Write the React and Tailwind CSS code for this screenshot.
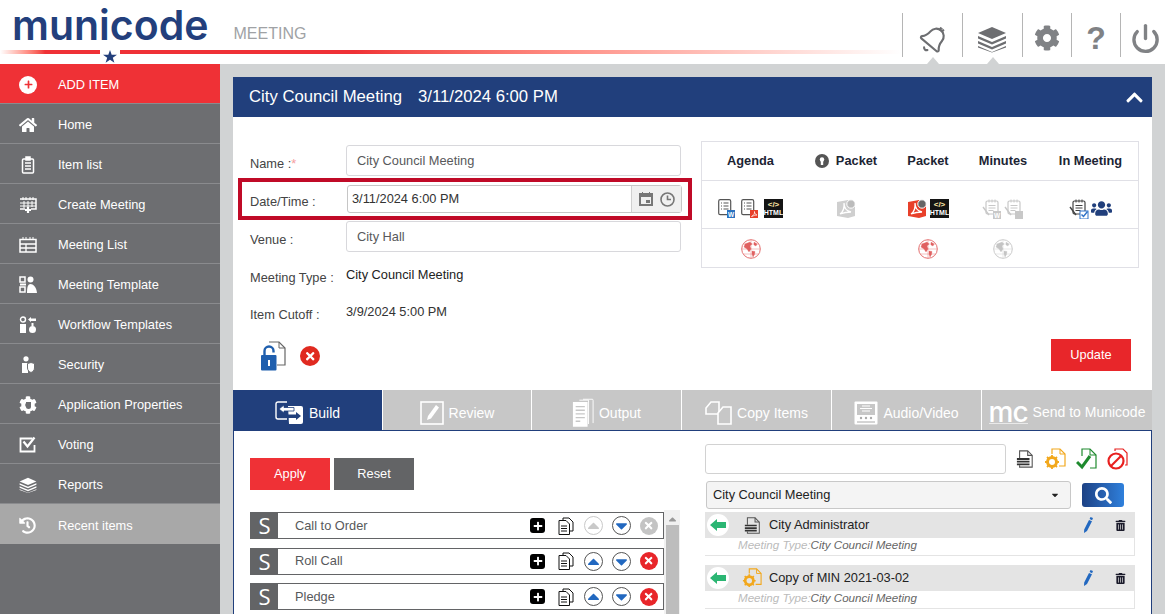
import { FaHome, FaCog, FaUsers, FaTrashAlt, FaHistory, FaChevronUp, FaSearch, FaCaretDown, FaPlus, FaTimes, FaCaretUp } from 'react-icons/fa'
import { Power } from 'lucide-react'

const sideItems = [
  { label: 'Home', icon: <FaHome size={18} /> },
  { label: 'Item list', icon: <ClipIcon /> },
  { label: 'Create Meeting', icon: <CalPlusIcon /> },
  { label: 'Meeting List', icon: <CalListIcon /> },
  { label: 'Meeting Template', icon: <TemplateIcon /> },
  { label: 'Workflow Templates', icon: <WorkflowIcon /> },
  { label: 'Security', icon: <SecurityIcon /> },
  { label: 'Application Properties', icon: <AppPropIcon /> },
  { label: 'Voting', icon: <VoteIcon /> },
  { label: 'Reports', icon: <StackIcon size={18} /> },
]

function ClipIcon() {
  return (
    <svg width="18" height="18" viewBox="0 0 18 18" fill="none" stroke="#fff" strokeWidth="1.5">
      <rect x="3.5" y="3" width="11" height="14" rx="1" />
      <rect x="7" y="1" width="4" height="3" fill="#fff" />
      <path d="M6 7h6M6 10h6M6 13h6" />
    </svg>
  )
}

function CalPlusIcon() {
  return (
    <svg width="18" height="18" viewBox="0 0 18 18" fill="none" stroke="#fff" strokeWidth="1.5">
      <path d="M1 3h16v10h-5M6 13H1z" />
      <path d="M4 1v3M7 1v3M11 1v3M14 1v3M1 7h16M1 10h16M5 5v7M9 5v6M13 5v6" strokeWidth="1" />
      <path d="M9 11v6M6 14h6" strokeWidth="2.2" />
    </svg>
  )
}

function CalListIcon() {
  return (
    <svg width="18" height="18" viewBox="0 0 18 18" fill="none" stroke="#fff" strokeWidth="1.5">
      <rect x="1" y="3.5" width="16" height="12.5" />
      <path d="M4 1v3M7 1v3M11 1v3M14 1v3" strokeWidth="1" />
      <path d="M1 8h16M1 12h16M7 8v8" strokeWidth="1.3" />
    </svg>
  )
}

function TemplateIcon() {
  return (
    <svg width="18" height="18" viewBox="0 0 18 18" fill="#fff">
      <circle cx="11.5" cy="3.5" r="3" />
      <path d="M8 17c0-6 1-9 3.500-9s6 3 6.500 9z" />
      <path d="M1 1h5v5H1zM1 11h5v5H1z" fill="none" stroke="#fff" strokeWidth="1.5" />
      <path d="M1 7.500h6v2H1z" />
    </svg>
  )
}

function WorkflowIcon() {
  return (
    <svg width="18" height="18" viewBox="0 0 18 18" fill="#fff">
      <circle cx="4" cy="3.500" r="2.500" fill="none" stroke="#fff" strokeWidth="1.400" />
      <path d="M1 8h6v9H1z" />
      <circle cx="13.500" cy="13.500" r="3.500" />
      <path d="M9 3.500l3-2.500v1.500h5v2.500h-5v1z" />
      <path d="M12.500 7h2v3h-2z" />
    </svg>
  )
}

function SecurityIcon() {
  return (
    <svg width="18" height="18" viewBox="0 0 18 18" fill="#fff">
      <circle cx="7" cy="2.800" r="2.600" />
      <path d="M3 7h6v10H3z" />
      <path d="M8.500 7.500l3.500-1 3.500 1v4.500c0 2.500-2 4-3.500 4.500-1.500-.5-3.500-2-3.500-4.500z" stroke="#6d6e71" strokeWidth="1" />
    </svg>
  )
}

function AppPropIcon() {
  return (
    <span className="relative flex h-[18px] w-[18px] items-center justify-center">
      <FaCog size={18} />
      <span className="absolute h-[7px] w-[5px] rounded-b-sm bg-[#6d6e71]" />
    </span>
  )
}

function VoteIcon() {
  return (
    <svg width="18" height="18" viewBox="0 0 18 18" fill="none" stroke="#fff">
      <path d="M15.500 9v6.500h-14v-13h12" strokeWidth="1.800" />
      <path d="M4.500 5.500l4 5 7-9" strokeWidth="2.200" />
    </svg>
  )
}

function StackIcon({ size = 30, color = '#fff' }) {
  return (
    <svg width={size} height={size} viewBox="0 0 30 30" fill={color}>
      <path d="M15 3l14 6-14 6-14-6z" />
      <path d="M1 12l14 6 14-6v2.500l-14 6-14-6z" />
      <path d="M1 17l14 6 14-6v2.500l-14 6-14-6z" />
      <path d="M1 22l14 6 14-6v1.500l-14 5-14-5z" />
    </svg>
  )
}

function BellIcon() {
  return (
    <svg width="30" height="30" viewBox="0 0 24 24" fill="none" stroke="#6d6e71" strokeWidth="1.700" strokeLinecap="round" strokeLinejoin="round" className="rotate-[40deg]">
      <path d="M10.268 21a2 2 0 0 0 3.464 0" />
      <path d="M3.262 15.326A1 1 0 0 0 4 17h16a1 1 0 0 0 .74-1.673C19.410 13.956 18 12.499 18 8A6 6 0 0 0 6 8c0 4.499-1.411 5.956-2.738 7.326" />
      <circle cx="12" cy="0.800" r="1.300" />
    </svg>
  )
}

function ListDoc({ badge, letter }) {
  return (
    <svg width="18" height="20" viewBox="0 0 18 20" fill="none">
      <rect x="0.700" y="0.700" width="12" height="15" rx="1.500" stroke="#555" strokeWidth="1.200" />
      <path d="M3 4h1M5.500 4h5M3 7h1M5.500 7h5M3 10h1M5.500 10h5" stroke="#555" strokeWidth="1.200" />
      <rect x="9" y="11" width="8" height="8" fill={badge} />
      {letter && <text x="13" y="17.500" fontSize="6.500" fontWeight="700" textAnchor="middle" fill="#fff" fontFamily="Liberation Sans">{letter}</text>}
      {!letter && <path d="M10.500 17.500c2-1 3.500-3 3-5 0 2 1 3 2.500 3.500-1.500 0-3 .5-5.500 1.500z" stroke="#fff" strokeWidth="0.700" />}
    </svg>
  )
}

function HtmlBadge() {
  return (
    <span className="flex h-[19px] w-[19px] flex-col items-center justify-center bg-[#141414] font-bold text-white">
      <span className="text-[8px] leading-[9px] text-[#ffe9a8]">&lt;/&gt;</span>
      <span className="text-[7px] leading-[8px]">HTML</span>
    </span>
  )
}

function PdfBox({ color, clock }) {
  return (
    <svg width="20" height="20" viewBox="0 0 20 20">
      <path d="M1 3l11-2 7 4v12l-7 2-11-2z" fill={color} />
      <path d="M4 15c3-2 4.500-6 4-11 0 5 2 8 7 9-4 0-7 .5-11 2z" fill="none" stroke="#fff" strokeWidth="1.300" />
      {clock && <circle cx="15" cy="5" r="4.200" fill={color === '#cfcfcf' ? '#bbb' : '#666'} stroke="#fff" />}
    </svg>
  )
}

function NoteDoc({ color, badge, letter, check }) {
  return (
    <svg width="20" height="20" viewBox="0 0 20 20" fill="none">
      <rect x="4" y="2" width="12" height="13" rx="1.500" stroke={color} strokeWidth="1.200" />
      <path d="M7 .500v3M10 .500v3M13 .500v3M6.500 6.500h7M6.500 9h7M6.500 11.500h5" stroke={color} strokeWidth="1" />
      <path d="M1 8l6 8" stroke={color} strokeWidth="1.400" />
      <rect x="11" y="12" width="8" height="8" fill={check ? '#fff' : badge} stroke={check ? '#2f73c9' : 'none'} />
      {letter && <text x="15" y="18.500" fontSize="6.500" fontWeight="700" textAnchor="middle" fill="#fff" fontFamily="Liberation Sans">{letter}</text>}
      {check && <path d="M12.500 15.500l2 2 4-5" stroke="#2f73c9" strokeWidth="1.500" />}
    </svg>
  )
}

function GlobeIcon({ color }) {
  return (
    <svg width="20" height="20" viewBox="0 0 20 20" fill="none" stroke={color}>
      <circle cx="10" cy="10" r="9.300" strokeWidth="0.900" />
      <path d="M1 10h18M10 1v18M3 5h14M3 15h14" strokeWidth="0.400" />
      <path d="M4 5l5-2 2 2-2 2 1 3-2 3-2-3-3-2z" fill={color} strokeWidth="0.300" />
      <path d="M11 12l3 .5-.5 3-1.500 2.500-1-3z" fill={color} strokeWidth="0.300" />
      <path d="M13 3l3 2-1 2-2-1z" fill={color} strokeWidth="0.300" />
    </svg>
  )
}

function KeyDot() {
  return (
    <svg width="14" height="14" viewBox="0 0 14 14" className="mr-[7px]">
      <circle cx="7" cy="7" r="7" fill="#555" />
      <circle cx="7" cy="5.500" r="2.200" fill="#fff" />
      <rect x="5.800" y="6" width="2.400" height="5" fill="#fff" />
    </svg>
  )
}

function LockDoc() {
  return (
    <svg width="26" height="30" viewBox="0 0 26 30" fill="none">
      <path d="M9 1h10l6 6v17h-8" stroke="#666" strokeWidth="1.200" fill="#fff" />
      <path d="M19 1v6h6" stroke="#666" />
      <path d="M4.500 14v-4a4.500 4.500 0 0 1 9 0v1.500" stroke="#1f5fae" strokeWidth="2.400" />
      <rect x="1" y="14" width="15.500" height="15.500" rx="1" fill="#1f5fae" />
      <rect x="8" y="19" width="2" height="6" fill="#fff" />
    </svg>
  )
}

function RedX({ size = 18, color = '#e8262a' }) {
  return (
    <span className="flex items-center justify-center rounded-full text-white" style={{ width: size, height: size, backgroundColor: color }}>
      <FaTimes size={size * 0.62} />
    </span>
  )
}

function RoundArrow({ dir, off }) {
  return (
    <span className={`flex h-[19px] w-[19px] items-center justify-center rounded-full border ${off ? 'border-[#c9c9c9]' : 'border-[#555]'}`}>
      {dir === 'up'
        ? <FaCaretUp size={19} className={off ? 'text-[#c9c9c9]' : 'text-[#2268c0]'} />
        : <FaCaretDown size={19} className="text-[#2268c0]" />}
    </span>
  )
}

function PasteDoc() {
  return (
    <svg width="16" height="18" viewBox="0 0 16 18" fill="none" stroke="#111" strokeWidth="1">
      <path d="M5 3V1h6l4 4v9h-3" />
      <path d="M1 3.500h7l3.500 3.500v10.500H1z" fill="#fff" />
      <path d="M3 9h6M3 11.500h6M3 14h6" />
    </svg>
  )
}

function GearDoc({ size = 22 }) {
  return (
    <svg width={size} height={size} viewBox="0 0 22 22" fill="none">
      <path d="M8 6V1h8l5 5v12h-6" stroke="#f2a81d" strokeWidth="1.200" />
      <path d="M16 1v5h5" stroke="#f2a81d" />
      <circle cx="8" cy="14" r="4.500" stroke="#f2a81d" strokeWidth="3" />
      <path d="M8 7v14M1 14h14M3 9l10 10M13 9L3 19" stroke="#f2a81d" strokeWidth="1.800" strokeDasharray="2 10.200" />
    </svg>
  )
}

function PlainDoc({ size = 20 }) {
  return (
    <svg width={size} height={size} viewBox="0 0 20 20" fill="none" stroke="#555" strokeWidth="1.200">
      <path d="M4 9V1h9l5 5v13H4v-2" />
      <path d="M13 1v5h5" />
      <path d="M1 10h14M1 13h14M1 16h14" strokeWidth="2" stroke="#333" />
    </svg>
  )
}

function TabIcon({ name }) {
  if (name === 'build') {
    return (
      <svg width="29" height="24" viewBox="0 0 29 24" fill="none">
        <path d="M12 1H3a2 2 0 0 0-2 2v13a2 2 0 0 0 2 2h9" stroke="#fff" strokeWidth="1.400" />
        <path d="M13 5h13a2 2 0 0 1 2 2v14a2 2 0 0 1-2 2H14z" fill="#fff" />
        <path d="M4 8l5-4v2.500h10V10H9v2z" fill="#fff" stroke="#213f7c" strokeWidth="0.800" />
        <path d="M26 15l-5-4v2.500H11V17h10v2z" fill="#213f7c" />
      </svg>
    )
  }
  if (name === 'review') {
    return (
      <svg width="24" height="24" viewBox="0 0 24 24" fill="none">
        <rect x="1" y="1" width="22" height="22" stroke="#fff" strokeWidth="1.600" />
        <path d="M7 19l1-4 8-11 3 2.500-8 11z" fill="#fff" />
      </svg>
    )
  }
  if (name === 'output') {
    return (
      <svg width="22" height="30" viewBox="0 0 24 32" fill="none">
        <path d="M8 2h10v26M12 1h10a1 1 0 0 1 1 1v25" stroke="#fff" strokeWidth="1" />
        <rect x="1" y="4" width="16" height="27" fill="#fff" />
        <path d="M4 9h10M4 13h10M4 17h10M4 21h10M4 25h5" stroke="#c7c7c7" strokeWidth="1.500" />
      </svg>
    )
  }
  if (name === 'copy') {
    return (
      <svg width="27" height="24" viewBox="0 0 27 24" fill="none" stroke="#fff" strokeWidth="1.600">
        <path d="M1 7l5-6h8v12H1z" />
        <path d="M13 12l5-6h8v17H13z" fill="#c7c7c7" />
      </svg>
    )
  }
  return (
    <svg width="24" height="24" viewBox="0 0 24 24" fill="none">
      <rect x="0.500" y="0.500" width="23" height="23" rx="1" fill="#fff" />
      <rect x="3" y="3" width="18" height="11" fill="#c7c7c7" />
      <path d="M8 5h8M6 7.500h12M8 10h8" stroke="#fff" strokeWidth="1" />
      <circle cx="7" cy="17" r="1.200" fill="#aaa" />
      <circle cx="12" cy="17" r="1.200" fill="#aaa" />
      <circle cx="17" cy="17" r="1.200" fill="#aaa" />
      <path d="M3 21h18" stroke="#aaa" strokeWidth="1" />
    </svg>
  )
}

function GreenArrow() {
  return (
    <svg width="16" height="12" viewBox="0 0 16 12" fill="#2bb673">
      <path d="M0 6l7-6v3h9v6H7v3z" />
    </svg>
  )
}

function BluePencil() {
  return (
    <svg width="10" height="16" viewBox="0 0 10 16" fill="#2268c0">
      <path d="M6 3l3 1.200L4 14l-3 2 .2-3.500zM6.600 2L7.500 0l2.500 1-.9 2.200z" />
    </svg>
  )
}

const tabs = [
  { label: 'Build', icon: 'build', w: 'w-[150px]', active: true },
  { label: 'Review', icon: 'review', w: 'w-[149px]' },
  { label: 'Output', icon: 'output', w: 'w-[150px]' },
  { label: 'Copy Items', icon: 'copy', w: 'w-[150px]' },
  { label: 'Audio/Video', icon: 'av', w: 'w-[150px]' },
]

const agendaRows = [
  { title: 'Call to Order', first: true },
  { title: 'Roll Call' },
  { title: 'Pledge' },
]

function AgendaRow({ title, first }) {
  return (
    <div className="flex h-[27px] items-center border border-[#636466] bg-white">
      <span className="flex h-full w-[27px] items-center justify-center bg-[#636466] font-['Open_Sans',sans-serif] text-[22px] text-white">S</span>
      <span className="ml-[17px] flex-1 text-[#58595b]">{title}</span>
      <span className="flex h-[15px] w-[15px] items-center justify-center rounded-[3px] bg-black text-white"><FaPlus size={10} /></span>
      <span className="ml-[13px] flex w-[16px]"><PasteDoc /></span>
      <span className="ml-[10px]"><RoundArrow dir="up" off={first} /></span>
      <span className="ml-[9px]"><RoundArrow dir="down" /></span>
      <span className="ml-[9px] mr-[5px]"><RedX color={first ? '#c4c4c4' : '#e8262a'} /></span>
    </div>
  )
}

function TemplateRow({ name, icon }) {
  return (
    <div className="mb-[9px] border-r border-b border-[#e4e4e4]">
      <div className="flex h-[26px] items-center bg-[#e4e4e4] pl-[2px] text-[#222]">
        <span className="flex h-[22px] w-[22px] items-center justify-center rounded-full bg-white"><GreenArrow /></span>
        <span className="ml-[13px] flex w-[20px] justify-center">{icon}</span>
        <span className="ml-[7px] flex-1">{name}</span>
        <span className="mr-[22px] flex"><BluePencil /></span>
        <FaTrashAlt size={11} className="mr-[8px] text-[#1a1a2a]" />
      </div>
      <div className="h-[17px] pl-[33px] text-[11.600px] leading-[13px] italic text-[#666]">
        <span className="text-[#bbb]">Meeting Type:</span>City Council Meeting
      </div>
    </div>
  )
}

export default function App() {
  return (
    <div className="flex h-[614px] flex-col overflow-hidden bg-[#d1d3d4] font-['Liberation_Sans',Arial,sans-serif] text-[12.800px]">
      <header className="flex h-16 shrink-0 bg-white">
        <div className="flex w-[902px] flex-col">
          <div className="flex h-[50px] items-start">
            <span className="mt-[5px] ml-[12px] font-['Inter',sans-serif] text-[41px] leading-[40px] font-semibold text-[#233f7c]">municode</span>
            <span className="mt-[24px] ml-[25px] text-[16px] leading-[20px] text-[#a0a2a5]">MEETING</span>
          </div>
          <div className="flex h-[14px] items-start">
            <div className="h-[4px] w-[100px] bg-gradient-to-r from-white to-[#ef3136] to-45%" />
            <span className="flex w-[20px] justify-center">
              <svg width="14" height="13" viewBox="0 0 14 13" fill="#233f7c">
                <path d="M7 0l1.700 4.700H14l-4.200 3 1.600 5L7 9.700l-4.400 3 1.600-5L0 4.700h5.300z" />
              </svg>
            </span>
            <div className="h-[4px] flex-1 bg-gradient-to-r from-[#ef3136] from-30% to-white" />
          </div>
        </div>
        <div className="flex flex-1 pt-[13px]">
          <div className="relative flex h-[44px] w-[60px] items-center justify-center border-l border-[#b5b5b5] pt-[9px]">
            <BellIcon />
            <span className="absolute top-[44px] left-[24px] border-x-[6px] border-b-[7px] border-x-transparent border-b-[#d1d3d4]" />
          </div>
          <div className="relative flex h-[44px] w-[60px] items-center justify-center border-l border-[#b5b5b5] pt-[7px] pr-[2px]">
            <StackIcon color="#6d6e71" />
            <span className="absolute top-[44px] left-[24px] border-x-[6px] border-b-[7px] border-x-transparent border-b-[#d1d3d4]" />
          </div>
          <div className="flex h-[44px] w-[49px] items-center justify-center border-l border-[#b5b5b5] pt-[6px] text-[#808285]">
            <FaCog size={26} />
          </div>
          <div className="flex h-[44px] w-[49px] items-center justify-center border-l border-[#b5b5b5] pt-[6px] text-[32px] leading-none font-bold text-[#808285]">
            ?
          </div>
          <div className="flex h-[44px] flex-1 items-center justify-center border-l border-[#b5b5b5] pt-[6px] pl-[5px] text-[#808285]">
            <Power size={31} strokeWidth={2.600} />
          </div>
        </div>
      </header>

      <div className="flex flex-1">
        <aside className="w-[220px] shrink-0 bg-[#6d6e71] text-white">
          <div className="flex h-10 items-center border-b border-[#8a8b8e] bg-[#ef3136] pt-[2px] pl-[19px]">
            <span className="flex h-[18px] w-[18px] items-center justify-center rounded-full bg-white text-[#ef3136]"><FaPlus size={9} /></span>
            <span className="ml-[21px]">ADD ITEM</span>
          </div>
          {sideItems.map(item => (
            <div key={item.label} className="flex h-10 items-center border-b border-[#8a8b8e] pt-[3px] pl-[19px] last:border-b-0">
              <span className="flex w-[18px] justify-center">{item.icon}</span>
              <span className="ml-[21px]">{item.label}</span>
            </div>
          ))}
          <div className="flex h-10 items-center bg-[#a8a8a8] pt-[3px] pl-[19px]">
            <FaHistory size={17} />
            <span className="ml-[22px]">Recent items</span>
          </div>
        </aside>

        <main className="flex-1 pt-[13px] pl-[13px]">
          <div className="w-[919px]">
            <div className="flex h-10 items-center justify-between bg-[#213f7c] pr-[8px] pl-[16px] text-[16.700px] text-white">
              <span>City Council Meeting<span className="ml-[16px]">3/11/2024 6:00 PM</span></span>
              <FaChevronUp size={19} />
            </div>

            <div className="flex h-[273px] bg-white">
              <div className="w-[459px] pt-[28px] pl-[17px] text-[#444]">
                <div className="flex h-[31px] w-[431px]">
                  <span className="mt-[9px] w-[96px]">Name :<span className="text-[#f5a0a0]">*</span></span>
                  <div className="flex h-full flex-1 items-center rounded-[3px] border border-[#d8d8dc] pl-[10px] text-[#58595b]">City Council Meeting</div>
                </div>
                <div className="mt-[2px] -ml-[12px] flex h-[42px] w-[454px] items-center border-4 border-[#c00a27] pl-[8px]">
                  <span className="mt-[5px] w-[97px]">Date/Time :</span>
                  <div className="flex h-[28px] w-[335px] items-center rounded-[3px] border border-[#c6c6c6] pl-[4px] text-[#333]">
                    <span className="flex-1">3/11/2024 6:00 PM</span>
                    <div className="flex h-full w-[50px] items-center justify-center gap-[7px] border-l border-[#d0d0d0] bg-[#f0f0f0] text-[#777]">
                      <svg width="14" height="14" viewBox="0 0 14 14" fill="#777"><path d="M0 1h3V0h1v1h6V0h1v1h3v13H0zM2 5v7h10V5z" fillRule="evenodd" /><path d="M7 8h4v3H7z" /></svg>
                      <svg width="15" height="15" viewBox="0 0 15 15" fill="none" stroke="#777" strokeWidth="1.600"><circle cx="7.500" cy="7.500" r="6.500" /><path d="M7.500 3.500v4h3.500" /></svg>
                    </div>
                  </div>
                </div>
                <div className="mt-[1px] flex h-[31px] w-[431px]">
                  <span className="mt-[9px] w-[96px]">Venue :</span>
                  <div className="flex h-full flex-1 items-center rounded-[3px] border border-[#d8d8dc] pl-[10px] text-[#58595b]">City Hall</div>
                </div>
                <div className="mt-[13px] flex">
                  <span className="mt-[3px] w-[96px]">Meeting Type :</span>
                  <span className="text-[#222]">City Council Meeting</span>
                </div>
                <div className="mt-[15px] flex">
                  <span className="mt-[3px] w-[96px]">Item Cutoff :</span>
                  <span className="text-[#333]">3/9/2024 5:00 PM</span>
                </div>
                <div className="mt-[17px] flex items-center pl-[10px]">
                  <LockDoc />
                  <span className="ml-[14px]"><RedX size={20} color="#e02a20" /></span>
                </div>
              </div>

              <div className="ml-[9px] w-[438px] pt-[24px]">
                <div className="border border-[#e0e0e6] text-center text-[#222]">
                  <div className="grid h-[39px] grid-cols-[97px_94px_70px_80px_1fr] items-center border-b border-[#e0e0e6] font-bold text-[#1c2433]">
                    <span>Agenda</span>
                    <span className="flex items-center justify-center"><KeyDot />Packet</span>
                    <span>Packet</span>
                    <span>Minutes</span>
                    <span>In Meeting</span>
                  </div>
                  <div className="grid h-[48px] grid-cols-[97px_94px_70px_80px_1fr] items-center border-b border-[#e0e0e6] pt-[8px]">
                    <span className="flex justify-center gap-[5px]"><ListDoc badge="#2a72c0" letter="W" /><ListDoc badge="#e8402a" /><HtmlBadge /></span>
                    <span className="flex justify-center"><PdfBox color="#cfcfcf" clock /></span>
                    <span className="flex justify-center gap-[3px]"><PdfBox color="#e8402a" clock /><HtmlBadge /></span>
                    <span className="flex justify-center gap-[2px]"><NoteDoc color="#c8c8c8" badge="#c8c8c8" letter="W" /><NoteDoc color="#c8c8c8" badge="#c8c8c8" /></span>
                    <span className="flex items-center justify-center gap-[2px]"><NoteDoc color="#444" check /><FaUsers size={21} className="text-[#213f7c]" /></span>
                  </div>
                  <div className="grid h-[38px] grid-cols-[97px_94px_70px_80px_1fr] items-center pt-[2px]">
                    <span className="flex justify-center"><GlobeIcon color="#e06060" /></span>
                    <span />
                    <span className="flex justify-center"><GlobeIcon color="#e06060" /></span>
                    <span className="flex justify-center"><GlobeIcon color="#c4c4c4" /></span>
                    <span />
                  </div>
                </div>
                <div className="mt-[71px] ml-[350px] flex h-8 w-20 items-center justify-center bg-[#e8262a] text-white">Update</div>
              </div>
            </div>

            <div className="flex h-10 bg-[#c7c7c7] text-[14px] text-white">
              {tabs.map(t => (
                <div key={t.label} className={`${t.w} flex items-center justify-center border-r border-white pt-[6px] ${t.active ? 'bg-[#213f7c]' : ''}`}>
                  <TabIcon name={t.icon} />
                  <span className="ml-[5px]">{t.label}</span>
                </div>
              ))}
              <div className="flex flex-1 items-center justify-center gap-[5px] pt-[5px]">
                <span className="border-b border-white/60 font-['Inter',sans-serif] text-[28px] leading-[22px] font-medium tracking-[-1px]">mc</span>
                <span>Send to Municode</span>
              </div>
            </div>

            <div className="flex h-[184px] border-x border-t border-[#213f7c] bg-white text-[#333]">
              <div className="w-[447px] shrink-0 pt-[27px] pl-[16px]">
                <div className="flex gap-1">
                  <div className="flex h-8 w-20 items-center justify-center bg-[#ef3136] text-white">Apply</div>
                  <div className="flex h-8 w-20 items-center justify-center bg-[#636466] text-white">Reset</div>
                </div>
                <div className="mt-[20px] flex">
                  <div className="flex w-[414px] flex-col gap-[8.500px] pt-[2px]">
                    {agendaRows.map(r => <AgendaRow key={r.title} {...r} />)}
                  </div>
                  <div className="flex h-[120px] w-[16px] flex-col items-center bg-[#f1f1f1] text-[#999]">
                    <FaCaretUp size={11} className="mt-[3px] h-[14px]" />
                    <div className="h-full w-[13px] bg-[#bdbdbd]" />
                  </div>
                </div>
              </div>

              <div className="w-[454px] shrink-0 pt-[13px] pl-[24px]">
                <div className="flex items-center">
                  <div className="h-[30px] w-[301px] rounded-[3px] border border-[#d2d2d2]" />
                  <span className="ml-[10px] flex w-[18px] justify-center"><PlainDoc /></span>
                  <span className="ml-[10px]"><GearDoc /></span>
                  <span className="ml-[10px]">
                    <svg width="21" height="22" viewBox="0 0 21 22" fill="none">
                      <path d="M6 8V1h8l6 6v13h-6" stroke="#1e8a2e" strokeWidth="1.200" />
                      <path d="M14 1v6h6" stroke="#1e8a2e" />
                      <path d="M1 14l5 5L14 8" stroke="#1e8a2e" strokeWidth="3" />
                    </svg>
                  </span>
                  <span className="ml-[10px]">
                    <svg width="21" height="22" viewBox="0 0 21 22" fill="none" stroke="#e8201f">
                      <path d="M8 3V1h8l4 4v12h-2" strokeWidth="1.200" />
                      <circle cx="9" cy="13" r="7.500" strokeWidth="2.200" fill="#fff" />
                      <path d="M4 18L14 8" strokeWidth="2.200" />
                    </svg>
                  </span>
                </div>
                <div className="mt-[7px] flex items-center">
                  <div className="ml-[1px] flex h-[28px] w-[365px] shrink-0 items-center rounded-[3px] border border-[#c8c8c8] bg-[#f4f4f4] pr-[10px] pl-[6px] text-[#222]">
                    <span className="flex-1">City Council Meeting</span>
                    <FaCaretDown size={10} />
                  </div>
                  <div className="ml-[11px] flex h-[24px] w-[42px] shrink-0 items-center justify-center rounded-[3px] bg-gradient-to-r from-[#1d4285] to-[#2f80dc] text-white"><FaSearch size={17} /></div>
                </div>
                <div className="mt-[3px]">
                  <TemplateRow name="City Administrator" icon={<PlainDoc size={17} />} />
                  <TemplateRow name="Copy of MIN 2021-03-02" icon={<GearDoc size={20} />} />
                </div>
              </div>
            </div>
          </div>
        </main>
      </div>
    </div>
  )
}
